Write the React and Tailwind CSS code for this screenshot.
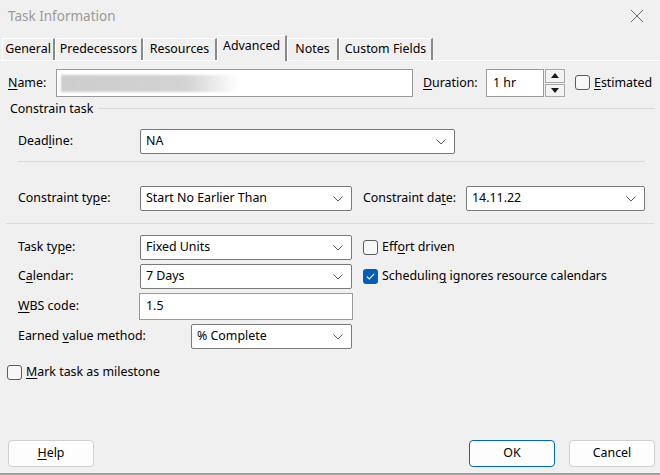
import React from "react";

const Chevron = () => (
  <svg width="10" height="6" viewBox="0 0 10 6">
    <path d="M0.5 0.5 L5 5 L9.5 0.5" fill="none" stroke="#5a5a5a" strokeWidth="1" />
  </svg>
);

const Select = ({ value, className = "" }) => (
  <div
    className={`flex items-center justify-between bg-white border border-[#7a7a7a] rounded-[2px] h-[25px] pl-[5px] pr-[8px] ${className}`}
  >
    <span>{value}</span>
    <Chevron />
  </div>
);

const Check = ({ checked }) =>
  checked ? (
    <div className="w-[15px] h-[15px] rounded-[3px] bg-[#005fb8] flex items-center justify-center shrink-0">
      <svg width="9" height="7" viewBox="0 0 9 7">
        <path d="M0.8 3.6 L3.3 6 L8.2 0.8" fill="none" stroke="white" strokeWidth="1.1" />
      </svg>
    </div>
  ) : (
    <div className="w-[15px] h-[15px] rounded-[3px] border border-[#5c5c5c] bg-[#f7f7f7] shrink-0" />
  );

const U = ({ children }) => <span className="underline underline-offset-2">{children}</span>;

const tabs = [
  { label: "General", w: "w-[53px]" },
  { label: "Predecessors", w: "w-[88px]" },
  { label: "Resources", w: "w-[74px]" },
  { label: "Advanced", w: "w-[70px]", active: true },
  { label: "Notes", w: "w-[52px]" },
  { label: "Custom Fields", w: "w-[94px]" },
];

const App = () => {
  return (
    <div className="w-[660px] h-[475px] bg-[#f0f0f0] text-[12.4px] text-black font-['Noto_Sans',sans-serif] flex flex-col overflow-hidden">
      {/* Title bar */}
      <div className="h-[33px] flex items-center justify-between pl-[8px] pr-[16px] pb-[1px]">
        <span className="text-[13.5px] text-[#9a9a9a]">Task Information</span>
        <svg width="14" height="14" viewBox="0 0 14 14">
          <path d="M1 1 L13 13 M13 1 L1 13" stroke="#6b6b6b" strokeWidth="1" />
        </svg>
      </div>

      {/* Tabs */}
      <div className="h-[28px] flex items-end pl-[2px] border-b border-white">
        {tabs.map((t) =>
          t.active ? (
            <div
              key={t.label}
              className={`${t.w} h-[26px] -mb-px pb-[4px] flex items-center justify-center bg-[#f0f0f0] border-t border-l border-white border-r-2 border-r-[#8a8a8a]`}
            >
              {t.label}
            </div>
          ) : (
            <div
              key={t.label}
              className={`${t.w} h-[22px] flex items-center justify-center border-t border-l border-white border-r-2 border-r-[#8a8a8a]`}
            >
              {t.label}
            </div>
          )
        )}
      </div>

      {/* Name row */}
      <div className="flex items-center h-[28px] mt-[8px] pl-[8px]">
        <span className="w-[48px]">
          <U>N</U>ame:
        </span>
        <div className="w-[357px] h-[28px] bg-white border border-[#9a9a9a] flex items-center pl-[4px]">
          <div className="w-[178px] h-[17px] blur-[1px] bg-[linear-gradient(to_right,#cdcdcd_0%,#d3d3d3_70%,#ffffff_100%)]" />
        </div>
        <span className="ml-[10px] w-[63px]">
          <U>D</U>uration:
        </span>
        <div className="w-[58px] h-[28px] bg-white border border-[#9a9a9a] flex items-center pl-[6px]">1 hr</div>
        <div className="ml-[1px] w-[20px] h-[28px] flex flex-col gap-[1px]">
          <div className="flex-1 bg-[#f3f3f3] border border-[#a8a8a8] flex items-center justify-center">
            <svg width="8" height="5" viewBox="0 0 8 5">
              <path d="M0 5 L4 0 L8 5 Z" fill="#1a1a1a" />
            </svg>
          </div>
          <div className="flex-1 bg-[#f3f3f3] border border-[#a8a8a8] flex items-center justify-center">
            <svg width="8" height="5" viewBox="0 0 8 5">
              <path d="M0 0 L4 5 L8 0 Z" fill="#1a1a1a" />
            </svg>
          </div>
        </div>
        <div className="ml-[10px] flex items-center gap-[4px]">
          <Check />
          <span>
            <U>E</U>stimated
          </span>
        </div>
      </div>

      {/* Constrain task group */}
      <div className="flex items-center mt-[5px] pl-[10px] pr-[5px] h-[15px]">
        <span>Constrain task</span>
        <div className="flex-1 h-px bg-[#dadada] ml-[5px] -mt-[2px]" />
      </div>

      <div className="flex items-center mt-[12px] pl-[18px]">
        <span className="w-[122px]">
          Dead<U>l</U>ine:
        </span>
        <Select value="NA" className="w-[315px]" />
      </div>

      <div className="ml-[18px] w-[627px] h-px bg-[#dadada] mt-[7px]" />

      <div className="flex items-center mt-[24px] pl-[18px]">
        <span className="w-[122px]">
          Constraint ty<U>p</U>e:
        </span>
        <Select value="Start No Earlier Than" className="w-[212px]" />
        <span className="ml-[11px] w-[103px]">
          Constraint da<U>t</U>e:
        </span>
        <Select value="14.11.22" className="w-[179px]" />
      </div>

      <div className="mx-[6px] h-px bg-[#dadada] mt-[12px]" />

      {/* Task settings */}
      <div className="flex items-center mt-[11px] pl-[18px]">
        <span className="w-[122px]">
          Task ty<U>p</U>e:
        </span>
        <Select value="Fixed Units" className="w-[212px]" />
        <div className="ml-[11px] flex items-center gap-[4px]">
          <Check />
          <span>
            Eff<U>o</U>rt driven
          </span>
        </div>
      </div>

      <div className="flex items-center mt-[4px] pl-[18px]">
        <span className="w-[122px]">
          C<U>a</U>lendar:
        </span>
        <Select value="7 Days" className="w-[212px]" />
        <div className="ml-[11px] flex items-center gap-[4px]">
          <Check checked />
          <span>
            Schedulin<U>g</U> ignores resource calendars
          </span>
        </div>
      </div>

      <div className="flex items-center mt-[4px] pl-[18px]">
        <span className="w-[121px]">
          <U>W</U>BS code:
        </span>
        <div className="w-[214px] h-[27px] bg-white border border-[#9a9a9a] flex items-center pl-[6px]">1.5</div>
      </div>

      <div className="flex items-center mt-[4px] pl-[18px]">
        <span className="w-[173px]">
          Earned <U>v</U>alue method:
        </span>
        <Select value="% Complete" className="w-[161px]" />
      </div>

      <div className="flex items-center mt-[14px] pl-[7px] gap-[4px]">
        <Check />
        <span>
          <U>M</U>ark task as milestone
        </span>
      </div>

      {/* Buttons */}
      <div className="flex items-center mt-[58px] pl-[8px] pr-[5px]">
        <button className="w-[86px] h-[27px] bg-[#fdfdfd] border border-[#d0d0d0] rounded-[4px]">
          <U>H</U>elp
        </button>
        <div className="flex-1" />
        <button className="w-[86px] h-[27px] bg-[#fdfdfd] border border-[#0067c0] rounded-[4px]">OK</button>
        <button className="ml-[14px] w-[86px] h-[27px] bg-[#fdfdfd] border border-[#d0d0d0] rounded-[4px]">
          Cancel
        </button>
      </div>

      <div className="mt-auto h-[2px] bg-[#a0a0a0]" />
    </div>
  );
};

export default App;
